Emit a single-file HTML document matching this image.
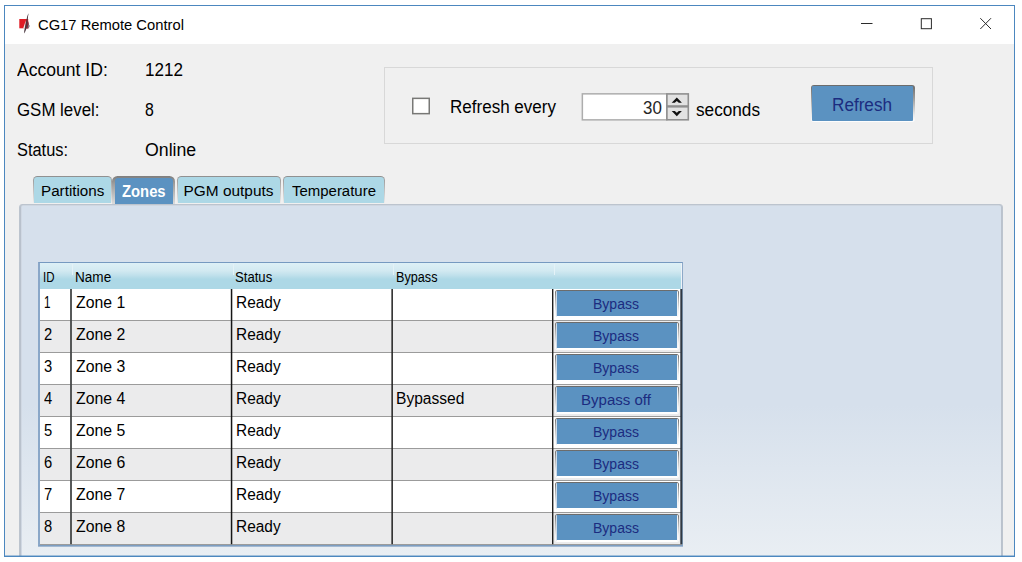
<!DOCTYPE html>
<html><head><meta charset="utf-8"><title>CG17 Remote Control</title>
<style>
html,body{margin:0;padding:0;background:#fff;}
body{width:1022px;height:562px;position:relative;overflow:hidden;font-family:"Liberation Sans",sans-serif;}
.t{position:absolute;white-space:nowrap;transform-origin:0 50%;display:block;}
.a{position:absolute;box-sizing:border-box;}
#win{left:4px;top:5px;width:1011px;height:552px;border:1px solid #4c87bf;background:#f0f0f0;}
#title{left:5px;top:6px;width:1009px;height:38px;background:#fff;}
#grp{left:384px;top:67px;width:549px;height:77px;border:1px solid #d8d8d8;}
.btn{background:linear-gradient(#6a6a6a 0%,#9a9a9a 35%,#e8e8e8 80%,#fff 100%);padding:1px;border-radius:3px;}
.btn i{display:block;width:100%;height:100%;background:#5b92c1;box-sizing:border-box;border-radius:1px;}
.rb{left:555px;width:124px;height:28px;border-radius:2.5px;padding:1px;background:linear-gradient(#686868 0%,#a9a9a9 30%,#f2f2f2 75%,#fff 100%);}
.rb i{border-left:1px solid #cfdbe8;border-right:1px solid #f3f5f7;border-bottom:1px solid #fff;border-radius:1px;}
.tab{top:176px;height:27px;border-radius:4.5px 4.5px 0 0;background:linear-gradient(#8f8f8f 0%,#a8a8a8 25%,#ececec 100%);padding:1.25px 1.25px 0 1.25px;}
.tab i{display:block;width:100%;height:100%;background:#add8e6;border-radius:3.2px 3.2px 0 0;}
.tab.sel{top:176.3px;height:28px;border-radius:5.5px 5.5px 0 0;background:linear-gradient(#7e7e7e 0%,#9f9f9f 30%,#dcdcdc 100%);padding:2.2px 2.4px 0 2.4px;}
.tab.sel i{background:#5b92c1;}
#panel{left:19px;top:204px;width:984px;height:360px;border:1px solid #bcc4ce;border-radius:3px;box-shadow:inset 1px 0 0 #b9c1cc,inset -1px 0 0 #bac2cd,inset 0 1px 0 #cfd7e1,inset 2px 0 0 #d0d8e3;background:linear-gradient(#d6e0ec 0px,#d6e0ec 200px,#e9eef3 350px);}
#tbl{left:38px;top:262px;width:645px;height:284px;background:#fff;border-left:2px solid #8aa7c8;border-top:1px solid #7699c0;border-right:1px solid #8da9c8;border-bottom:1px solid #7c9dc1;box-shadow:0 1px 0 #a3b9d2;}
#hdr{left:40px;top:263.3px;width:641.5px;height:25.7px;background:linear-gradient(#def0f6 0%,#d2e9f1 30%,#bfe0eb 48%,#add8e6 62%,#add8e6 100%);border-right:1.2px solid #eef3f8;}
.hs{top:264px;width:1px;height:11px;background:#e4f2f7;}
.row{left:40px;width:642px;}
.hl{left:40px;width:642px;height:1.2px;background:#9b9b9b;}
</style></head><body>
<div class="a" id="win"></div>
<div class="a" id="title"></div>
<svg class="a" style="left:14px;top:10px" width="22" height="28" viewBox="14 10 22 28">
<path d="M19.3 19 H28.2 V28.3 H19.3 Z" fill="#e01b24"/>
<path d="M26.4 22 L28.3 21.5 L28.9 24 L29.3 26.8 L28.3 28.4 H25 Z" fill="#8b2636"/>
<path d="M28.4 24 L29.4 25.5 L29.2 27.3 L27.6 28.6 Z" fill="#7c838c"/>
<path d="M25.9 20.2 L23.1 28.5 H25.2 Z" fill="#ece6e6"/>
<path d="M28.6 13.2 C28.1 15.5 27.9 17.5 27.8 19.5 C27.6 22 27.3 24.5 26.6 27.5 C26.1 29.8 25.3 32 24.1 33.6 C24.0 31.5 24.4 29.5 24.9 27.4 C25.5 25 26 22.6 26.4 20.2 C26.8 17.8 27.4 15.2 28.6 13.2 Z" fill="#4a3840"/>
</svg>
<span class="t" style="left:38.30px;top:16px;font-size:15.4px;line-height:17px;color:#000;transform:scaleX(0.9583);">CG17 Remote Control</span>
<svg class="a" style="left:850px;top:10px" width="150" height="28" viewBox="850 10 150 28" fill="none" stroke="#2b2b2b" stroke-width="1">
<path d="M861 23.5H872.5"/>
<rect x="921.3" y="18.7" width="10.1" height="10"/>
<path d="M980.3 18.2L991 29M991 18.2L980.3 29"/>
</svg>
<span class="t" style="left:17.00px;top:60px;font-size:18px;line-height:20px;color:#000;transform:scaleX(0.9759);">Account ID:</span>
<span class="t" style="left:145.20px;top:60px;font-size:18px;line-height:20px;color:#000;transform:scaleX(0.9490);">1212</span>
<span class="t" style="left:17.00px;top:100px;font-size:18px;line-height:20px;color:#000;transform:scaleX(0.9373);">GSM level:</span>
<span class="t" style="left:145.20px;top:100px;font-size:18px;line-height:20px;color:#000;transform:scaleX(0.8790);">8</span>
<span class="t" style="left:17.00px;top:140px;font-size:18px;line-height:20px;color:#000;transform:scaleX(0.9102);">Status:</span>
<span class="t" style="left:145.30px;top:140px;font-size:18px;line-height:20px;color:#000;transform:scaleX(0.9840);">Online</span>
<div class="a" id="grp"></div><svg class="a" style="left:408px;top:94px" width="26" height="24" viewBox="408 94 26 24"><rect x="412.75" y="98.35" width="16.5" height="15.3" fill="#fff" stroke="#787876" stroke-width="1.5"/></svg>
<span class="t" style="left:450.20px;top:97px;font-size:18px;line-height:20px;color:#000;transform:scaleX(0.9461);">Refresh every</span>
<svg class="a" style="left:578px;top:90px" width="116" height="34" viewBox="578 90 116 34">
<rect x="582.35" y="93.85" width="84.4" height="26" fill="#fff" stroke="#adadad" stroke-width="1.5"/>
<rect x="666.9" y="93.9" width="21.4" height="25.9" fill="#e2e2e2" stroke="#8f8f8f" stroke-width="1.6"/>
<rect x="666.9" y="105.2" width="21.4" height="2.4" fill="#8f8f8f"/>
<path d="M676.8 97.5 L681.9 102.7 H678.8 L676.8 100.9 L674.8 102.7 H671.7 Z" fill="#111"/>
<path d="M676.8 116.2 L681.9 110.9 H678.8 L676.8 112.8 L674.8 110.9 H671.7 Z" fill="#111"/>
</svg>
<span class="t" style="left:643.40px;top:98px;font-size:18px;line-height:20px;color:#262626;transform:scaleX(0.9390);">30</span>
<span class="t" style="left:696.00px;top:100px;font-size:18px;line-height:20px;color:#000;transform:scaleX(0.9546);">seconds</span>
<div class="a btn" style="left:811px;top:85px;width:104px;height:37.4px;padding:1px 1.6px 1.4px 1.1px"><i></i></div>
<span class="t" style="left:832.40px;top:95px;font-size:18px;line-height:20px;color:#1b2c80;transform:scaleX(0.9520);">Refresh</span>
<div class="a" id="panel"></div>
<div class="a tab" style="left:33.2px;width:78.80px"><i></i></div>
<div class="a tab" style="left:176.8px;width:104.40px"><i></i></div>
<div class="a tab" style="left:283.2px;width:101.60px"><i></i></div>
<div class="a tab sel" style="left:112.4px;width:63.00px"><i></i></div>
<span class="t" style="left:40.60px;top:182px;font-size:15.4px;line-height:17px;color:#000;transform:scaleX(0.9876);">Partitions</span>
<span class="t" style="left:122.20px;top:183px;font-size:16px;line-height:17px;color:#fff;font-weight:bold;transform:scaleX(0.9253);">Zones</span>
<span class="t" style="left:183.60px;top:182px;font-size:15.4px;line-height:17px;color:#000;">PGM outputs</span>
<span class="t" style="left:292.00px;top:182px;font-size:15.4px;line-height:17px;color:#000;transform:scaleX(0.9716);">Temperature</span>
<div class="a" id="tbl"></div><div class="a" id="hdr"></div>
<div class="a hs" style="left:72px"></div><div class="a hs" style="left:233px"></div><div class="a hs" style="left:393px"></div><div class="a hs" style="left:554px"></div>
<span class="t" style="left:43.00px;top:269px;font-size:14px;line-height:16px;color:#000;transform:scaleX(0.8214);">ID</span>
<span class="t" style="left:75.00px;top:269px;font-size:14px;line-height:16px;color:#000;transform:scaleX(0.9693);">Name</span>
<span class="t" style="left:235.20px;top:269px;font-size:14px;line-height:16px;color:#000;transform:scaleX(0.9373);">Status</span>
<span class="t" style="left:395.70px;top:269px;font-size:14px;line-height:16px;color:#000;transform:scaleX(0.9039);">Bypass</span>
<div class="a row" style="top:289px;height:31px;background:#fff"></div><div class="a hl" style="top:319.8px"></div>
<span class="t" style="left:44.30px;top:294px;font-size:16px;line-height:17px;color:#000;transform:scaleX(0.7305);">1</span>
<span class="t" style="left:75.50px;top:294px;font-size:16px;line-height:17px;color:#000;transform:scaleX(0.9877);">Zone 1</span>
<span class="t" style="left:236.00px;top:294px;font-size:16px;line-height:17px;color:#000;transform:scaleX(0.9643);">Ready</span>
<div class="a btn rb" style="top:290px"><i></i></div>
<span class="t" style="left:593.30px;top:295px;font-size:15.4px;line-height:17px;color:#1b2c80;transform:scaleX(0.9109);">Bypass</span>
<div class="a row" style="top:321px;height:31px;background:#ebebec"></div><div class="a hl" style="top:351.8px"></div>
<span class="t" style="left:44.30px;top:326px;font-size:16px;line-height:17px;color:#000;transform:scaleX(0.9215);">2</span>
<span class="t" style="left:75.50px;top:326px;font-size:16px;line-height:17px;color:#000;transform:scaleX(0.9877);">Zone 2</span>
<span class="t" style="left:236.00px;top:326px;font-size:16px;line-height:17px;color:#000;transform:scaleX(0.9643);">Ready</span>
<div class="a btn rb" style="top:322px"><i></i></div>
<span class="t" style="left:593.30px;top:327px;font-size:15.4px;line-height:17px;color:#1b2c80;transform:scaleX(0.9109);">Bypass</span>
<div class="a row" style="top:353px;height:31px;background:#fff"></div><div class="a hl" style="top:383.8px"></div>
<span class="t" style="left:44.30px;top:358px;font-size:16px;line-height:17px;color:#000;transform:scaleX(0.9215);">3</span>
<span class="t" style="left:75.50px;top:358px;font-size:16px;line-height:17px;color:#000;transform:scaleX(0.9877);">Zone 3</span>
<span class="t" style="left:236.00px;top:358px;font-size:16px;line-height:17px;color:#000;transform:scaleX(0.9643);">Ready</span>
<div class="a btn rb" style="top:354px"><i></i></div>
<span class="t" style="left:593.30px;top:359px;font-size:15.4px;line-height:17px;color:#1b2c80;transform:scaleX(0.9109);">Bypass</span>
<div class="a row" style="top:385px;height:31px;background:#ebebec"></div><div class="a hl" style="top:415.8px"></div>
<span class="t" style="left:44.30px;top:390px;font-size:16px;line-height:17px;color:#000;transform:scaleX(0.9215);">4</span>
<span class="t" style="left:75.50px;top:390px;font-size:16px;line-height:17px;color:#000;transform:scaleX(0.9877);">Zone 4</span>
<span class="t" style="left:236.00px;top:390px;font-size:16px;line-height:17px;color:#000;transform:scaleX(0.9643);">Ready</span>
<span class="t" style="left:396.20px;top:390px;font-size:16px;line-height:17px;color:#000;transform:scaleX(0.9734);">Bypassed</span>
<div class="a btn rb" style="top:386px"><i></i></div>
<span class="t" style="left:581.40px;top:391px;font-size:15.4px;line-height:17px;color:#1b2c80;transform:scaleX(0.9773);">Bypass off</span>
<div class="a row" style="top:417px;height:31px;background:#fff"></div><div class="a hl" style="top:447.8px"></div>
<span class="t" style="left:44.30px;top:422px;font-size:16px;line-height:17px;color:#000;transform:scaleX(0.9215);">5</span>
<span class="t" style="left:75.50px;top:422px;font-size:16px;line-height:17px;color:#000;transform:scaleX(0.9877);">Zone 5</span>
<span class="t" style="left:236.00px;top:422px;font-size:16px;line-height:17px;color:#000;transform:scaleX(0.9643);">Ready</span>
<div class="a btn rb" style="top:418px"><i></i></div>
<span class="t" style="left:593.30px;top:423px;font-size:15.4px;line-height:17px;color:#1b2c80;transform:scaleX(0.9109);">Bypass</span>
<div class="a row" style="top:449px;height:31px;background:#ebebec"></div><div class="a hl" style="top:479.8px"></div>
<span class="t" style="left:44.30px;top:454px;font-size:16px;line-height:17px;color:#000;transform:scaleX(0.9215);">6</span>
<span class="t" style="left:75.50px;top:454px;font-size:16px;line-height:17px;color:#000;transform:scaleX(0.9877);">Zone 6</span>
<span class="t" style="left:236.00px;top:454px;font-size:16px;line-height:17px;color:#000;transform:scaleX(0.9643);">Ready</span>
<div class="a btn rb" style="top:450px"><i></i></div>
<span class="t" style="left:593.30px;top:455px;font-size:15.4px;line-height:17px;color:#1b2c80;transform:scaleX(0.9109);">Bypass</span>
<div class="a row" style="top:481px;height:31px;background:#fff"></div><div class="a hl" style="top:511.8px"></div>
<span class="t" style="left:44.30px;top:486px;font-size:16px;line-height:17px;color:#000;transform:scaleX(0.9215);">7</span>
<span class="t" style="left:75.50px;top:486px;font-size:16px;line-height:17px;color:#000;transform:scaleX(0.9877);">Zone 7</span>
<span class="t" style="left:236.00px;top:486px;font-size:16px;line-height:17px;color:#000;transform:scaleX(0.9643);">Ready</span>
<div class="a btn rb" style="top:482px"><i></i></div>
<span class="t" style="left:593.30px;top:487px;font-size:15.4px;line-height:17px;color:#1b2c80;transform:scaleX(0.9109);">Bypass</span>
<div class="a row" style="top:513px;height:31px;background:#ebebec"></div><div class="a hl" style="top:543.8px"></div>
<span class="t" style="left:44.30px;top:518px;font-size:16px;line-height:17px;color:#000;transform:scaleX(0.9215);">8</span>
<span class="t" style="left:75.50px;top:518px;font-size:16px;line-height:17px;color:#000;transform:scaleX(0.9877);">Zone 8</span>
<span class="t" style="left:236.00px;top:518px;font-size:16px;line-height:17px;color:#000;transform:scaleX(0.9643);">Ready</span>
<div class="a btn rb" style="top:514px"><i></i></div>
<span class="t" style="left:593.30px;top:519px;font-size:15.4px;line-height:17px;color:#1b2c80;transform:scaleX(0.9109);">Bypass</span>
<svg class="a" style="left:0;top:289px" width="700" height="256" viewBox="0 289 700 256"><rect x="70.1" y="289" width="1.8" height="255.2" fill="#454747"/><rect x="230.8" y="289" width="1.5" height="255.2" fill="#161616"/><rect x="391.4" y="289" width="1.5" height="255.2" fill="#222"/><rect x="552.0" y="289" width="1.4" height="255.2" fill="#1e1e1e"/><rect x="680.3" y="289" width="2.0" height="255.2" fill="#2f3843"/></svg>
<div class="a" style="left:0;top:556px;width:1022px;height:6px;background:#fff"></div><div class="a" style="left:4px;top:556px;width:1011px;height:1px;background:#4c87bf"></div><div class="a" style="left:5px;top:555px;width:1009px;height:1px;background:rgba(76,135,191,0.45)"></div>
</body></html>
